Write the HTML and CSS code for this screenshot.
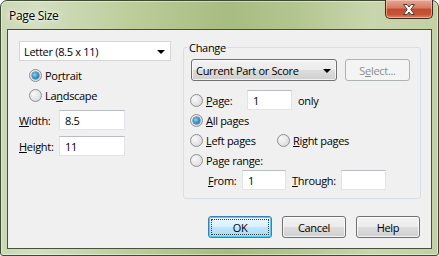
FILE: index.html
```html
<!DOCTYPE html>
<html>
<head>
<meta charset="utf-8">
<title>Page Size</title>
<link rel="stylesheet" href="styles.css">
</head>
<body>
<div class="window">
  <div class="titlebar">
    <span class="title">Page Size</span>
    <div class="close"><svg width="14" height="11" viewBox="0 0 14 11"><path d="M1.5 0.5 H5 L7 3 L9 0.5 H12.5 L8.8 5.5 L12.5 10.5 H9 L7 8 L5 10.5 H1.5 L5.2 5.5 Z" fill="#ffffff" stroke="#5a3b33" stroke-width="1"/></svg></div>
  </div>
  <div class="client">
    <div class="main">
      <div class="left">
        <div class="select"><span>Letter (8.5 x 11)</span><span class="arrow"></span></div>
        <div class="orient">
          <div class="radio-row"><span class="radio checked"></span><span>Po<u>r</u>trait</span></div>
          <div class="radio-row"><span class="radio"></span><span>La<u>n</u>dscape</span></div>
        </div>
        <div class="field"><span class="flabel"><u>W</u>idth:</span><span class="input w-size">8.5</span></div>
        <div class="field gap6"><span class="flabel"><u>H</u>eight:</span><span class="input w-size">11</span></div>
      </div>
      <fieldset class="group">
        <legend>Change</legend>
        <div class="combo-row">
          <div class="combo"><span>Current Part or Score</span><span class="arrow"></span></div>
          <div class="btn disabled">S<u>e</u>lect...</div>
        </div>
        <div class="radio-row page-row"><span class="radio"></span><span class="page-lbl"><u>P</u>age:</span><span class="input w-page">1</span><span class="only">only</span></div>
        <div class="radio-row"><span class="radio checked"></span><span><u>A</u>ll pages</span></div>
        <div class="radio-row">
          <div class="radio-item left-pages"><span class="radio"></span><span><u>L</u>eft pages</span></div>
          <div class="radio-item"><span class="radio"></span><span><u>R</u>ight pages</span></div>
        </div>
        <div class="radio-row"><span class="radio"></span><span>Page range:</span></div>
        <div class="range-row">
          <span class="from-lbl"><u>F</u>rom:</span><span class="input w-from">1</span>
          <span class="through"><u>T</u>hrough:</span><span class="input w-through"></span>
        </div>
      </fieldset>
    </div>
    <div class="buttons">
      <div class="btn default"><span class="focus">OK</span></div>
      <div class="btn">Cancel</div>
      <div class="btn">Help</div>
    </div>
  </div>
</div>
</body>
</html>
```

FILE: styles.css
```css
* { box-sizing: border-box; }
html, body { margin: 0; padding: 0; background: #ffffff; }
body {
  width: 439px; height: 256px; overflow: hidden;
  font-family: "Open Sans", "Liberation Sans", sans-serif;
  font-size: 11px; color: #000; letter-spacing: -0.3px;
}
u { text-decoration: underline; text-underline-offset: 1px; }

.window {
  width: 439px; height: 256px;
  border: 1px solid #3f4a33;
  border-radius: 7px 7px 3px 3px;
  background: linear-gradient(90deg, #cbd8b4 0%, #d3dfc0 8%, #bccd9a 30%, #a7bc80 52%, #b4c690 68%, #c9d6ad 85%, #c2d0a4 100%);
  display: flex; flex-direction: column;
  box-shadow: inset 0 0 0 1px rgba(255,255,255,0.45);
}
.titlebar {
  height: 28px; flex: none;
  display: flex; align-items: flex-start;
}
.title {
  padding: 7px 0 0 8px; flex: 1;
  font-size: 12px; line-height: 16px;
  text-shadow: 0 0 6px #ffffff, 0 0 3px #ffffff;
}
.close {
  width: 48px; height: 19px; margin: -1px 5px 0 0;
  border: 1px solid #3e2a25; border-top: none;
  border-radius: 0 0 5px 5px;
  background: linear-gradient(#e5a898 0%, #d77a63 45%, #c14b2f 50%, #c75335 80%, #d98a66 100%);
  box-shadow: inset 0 0 0 1px rgba(255,210,190,0.55);
  display: flex; align-items: center; justify-content: center;
}
.close svg { display: block; margin-top: 1px; }

.client {
  flex: 1;
  margin: 0 6px 6px 6px;
  border: 1px solid #46513a;
  background: #f0f0f0;
  padding: 11px 10px 0 11px;
  display: flex; flex-direction: column;
}
.main { display: flex; align-items: flex-start; gap: 12px; }
.left { width: 152px; flex: none; display: flex; flex-direction: column; }

.select {
  height: 20px; background: #fff;
  border: 1px solid #d6d6d6;
  display: flex; align-items: center; justify-content: space-between;
  padding: 0 5px 0 4px;
}
.arrow {
  width: 0; height: 0;
  border-left: 4px solid transparent; border-right: 4px solid transparent;
  border-top: 4px solid #000;
  margin-top: 1px;
}
.orient { margin-top: 4px; padding-left: 10px; }
.radio-row { height: 20px; display: flex; align-items: center; }
.radio-item { display: flex; align-items: center; }
.left-pages { width: 87px; }
.radio {
  width: 13px; height: 13px; flex: none; border-radius: 50%;
  border: 1px solid #8c8f92;
  background: radial-gradient(circle at 35% 35%, #f8f8f8 0%, #e2e3e4 60%, #cfd1d3 100%);
  margin-right: 3px;
  display: flex; align-items: center; justify-content: center;
}
.radio.checked::after {
  content: ""; width: 7px; height: 7px; border-radius: 50%;
  background: radial-gradient(circle at 40% 40%, #8fd7f8 0%, #3a98d2 45%, #1a5d95 100%);
  box-shadow: 0 0 0 0.5px #2d5f88;
}

.field { display: flex; align-items: center; margin-top: 5px; }
.field.gap6 { margin-top: 6px; }
.flabel { width: 40px; }
.input {
  height: 20px; background: #fff;
  border: 1px solid #e0e3e7; border-top-color: #b9bdc2;
  padding: 0 5px; display: flex; align-items: center;
}
.w-size { width: 66px; }
.w-page { width: 45px; margin-left: 0; }
.w-from { width: 44px; }
.w-through { width: 45px; }

.group {
  width: 238px; flex: none; margin: -1px 0 0 0;
  border: 1px solid #d5dfe5; border-radius: 3px;
  padding: 4px 7px 8px 7px;
  min-width: 0;
}
.group legend { padding: 0 1px; margin-left: -3px; line-height: 15px; font-size: 11px; }
.combo-row { display: flex; gap: 8px; height: 22px; margin-bottom: 9px; }
.combo {
  width: 146px; height: 22px;
  border: 1px solid #707070; border-radius: 3px;
  background: linear-gradient(#f2f2f2 0%, #ebebeb 50%, #dddddd 51%, #cfcfcf 100%);
  box-shadow: inset 0 0 0 1px rgba(255,255,255,0.7);
  display: flex; align-items: center; justify-content: space-between;
  padding: 0 5px 0 4px;
}
.btn {
  width: 64px; height: 22px;
  border: 1px solid #707070; border-radius: 3px;
  background: linear-gradient(#f2f2f2 0%, #ebebeb 50%, #dddddd 51%, #cfcfcf 100%);
  box-shadow: inset 0 0 0 1px rgba(255,255,255,0.75);
  display: flex; align-items: center; justify-content: center;
}
.btn.disabled {
  width: 65px; color: #8d8d8d;
  border-color: #adb2b5; background: #f4f4f4; box-shadow: none;
}
.page-row { margin-left: -1px; }
.page-lbl { width: 41px; }
.only { margin-left: 6px; }
.group > .radio-row { margin-left: -1px; }
.range-row { display: flex; align-items: center; padding-left: 17px; height: 20px; }
.from-lbl { width: 34px; flex: none; }
.through { width: 49px; flex: none; margin-left: 6px; white-space: nowrap; }

.buttons {
  display: flex; justify-content: flex-end; gap: 10px;
  margin-top: 17px; padding-right: 1px;
}
.btn.default {
  border-color: #3c7fb1;
  background: linear-gradient(#eaf6fd 0%, #d9f0fc 50%, #bee6fd 51%, #a7d9f5 100%);
  box-shadow: inset 0 0 0 1px #48d0f8;
  padding: 2px;
}
.focus {
  width: 100%; height: 100%;
  border: 1px dotted #3a3a3a;
  display: flex; align-items: center; justify-content: center;
}
```
